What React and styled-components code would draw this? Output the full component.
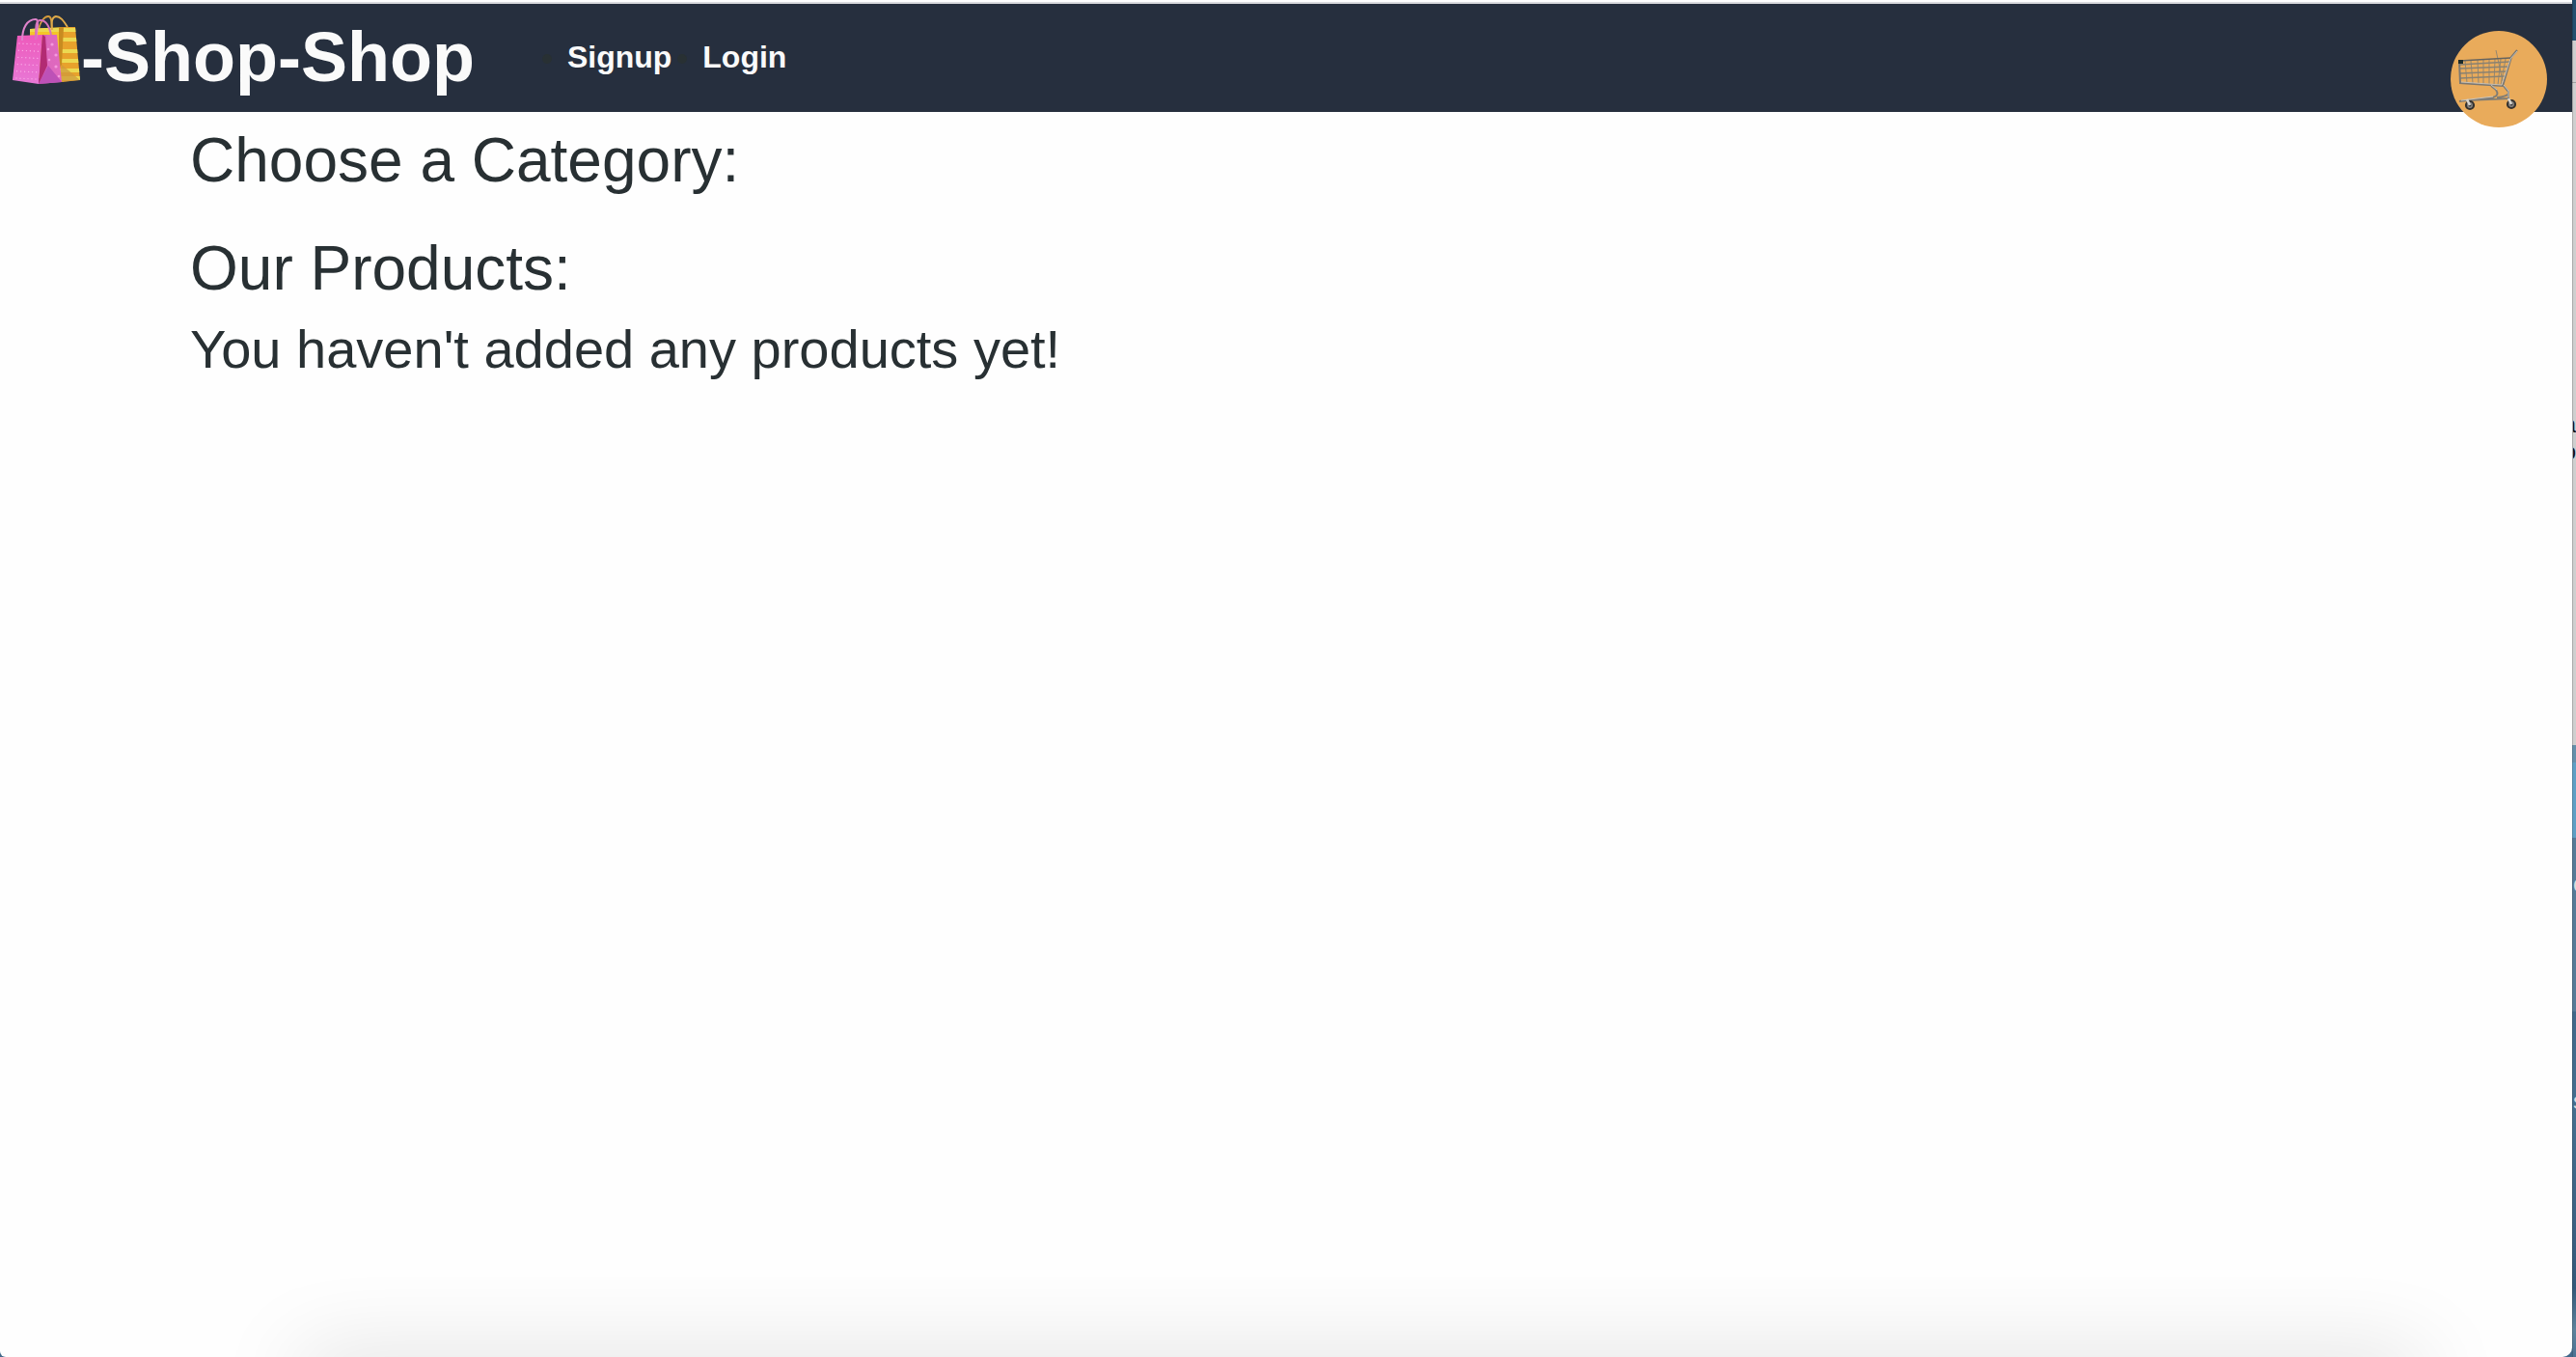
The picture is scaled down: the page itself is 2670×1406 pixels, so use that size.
import React from "react";
import styled, { createGlobalStyle } from "styled-components";

const GlobalStyle = createGlobalStyle`
  *, *::before, *::after { box-sizing: border-box; }
  body {
    margin: 0;
    background: #41688a;
    color: #283033;
    font-family: "Liberation Sans", Arial, Helvetica, sans-serif;
  }
`;

const Desktop = styled.div`
  display: flex;
  min-height: 100vh;
  overflow: hidden;
`;

const Page = styled.div`
  position: relative;
  flex: 1;
  min-width: 0;
  overflow: hidden;
  background: #fefefe;
  border-radius: 0 0 10px 6px;
`;

const Header = styled.header`
  position: relative;
  display: flex;
  align-items: center;
  height: 114px;
  margin-top: 2px;
  padding: 0 10px 2px;
  border-top: 2px solid #d9dade;
  background: #262f3e;
`;

const Brand = styled.h1`
  margin: 0;
  font-size: 72px;
  line-height: 108px;
  font-weight: 700;
`;

const BrandLink = styled.a`
  display: flex;
  align-items: center;
  gap: 2px;
  color: #fafafa;
  text-decoration: none;
`;

const BagsIcon = styled.svg`
  width: 72px;
  height: 72px;
  margin-bottom: 12px;
  overflow: visible;
`;

const NavList = styled.ul`
  display: flex;
  gap: 32px;
  margin: 0 0 0 96px;
  padding: 0;
  font-size: 32px;
  line-height: 48px;
`;

const NavItem = styled.li`
  list-style: disc;
`;

const NavLink = styled.a`
  color: #fafafa;
  font-weight: 700;
  text-decoration: none;
`;

const CartButton = styled.button`
  position: absolute;
  top: 28px;
  right: 26px;
  width: 100px;
  height: 100px;
  padding: 0;
  border: 0;
  border-radius: 50%;
  background: #e9ab5b;
  cursor: pointer;
`;

const CartIcon = styled.svg`
  display: block;
  width: 100px;
  height: 100px;
`;

const Main = styled.main`
  display: grid;
  gap: 40px;
  padding: 14px 197px;
`;

const Section = styled.section`
  display: grid;
  gap: 16px;
`;

const Title = styled.h2`
  margin: 0;
  font-size: 64px;
  line-height: 72px;
  font-weight: 400;
`;

const Notice = styled.h3`
  margin: 0;
  font-size: 56px;
  line-height: 64px;
  font-weight: 400;
`;

const DockShadow = styled.div`
  position: absolute;
  left: 312px;
  right: 156px;
  bottom: -44px;
  height: 40px;
  box-shadow: 0 0 90px rgba(0, 0, 0, 0.18);
`;

const Backdrop = styled.div`
  position: relative;
  display: flex;
  flex-direction: column;
  width: 4px;
  overflow: hidden;
`;

const Band = styled.div`
  flex: ${(p) => p.$grow || 0} 0 ${(p) => p.$size || 0}px;
  background: ${(p) => p.$fill};
  box-shadow: inset 1px 0 0 rgba(0, 0, 0, 0.18);
`;

const Peek = styled.span`
  position: absolute;
  top: ${(p) => p.$top}px;
  right: 0;
  width: 3px;
  overflow: hidden;
  color: ${(p) => p.$color};
  font-size: 24px;
  line-height: 24px;
  direction: ${(p) => (p.$end ? "rtl" : "ltr")};
`;

const dots = [];
for (let row = 0; row < 6; row += 1) {
  for (let col = 0; col < 6; col += 1) {
    dots.push([20 + col * 4 - row * 0.6, 46 + row * 7.2 + col * 0.2]);
  }
}

function Bags() {
  return (
    <BagsIcon viewBox="10 18 72 72" aria-hidden="true">
      <defs>
        <linearGradient id="pink" x1="0" y1="0" x2="0" y2="1">
          <stop offset="0" stopColor="#ee5abb" />
          <stop offset="1" stopColor="#e878d6" />
        </linearGradient>
        <linearGradient id="side" x1="0" y1="0" x2="1" y2="0">
          <stop offset="0" stopColor="#c84a9e" />
          <stop offset="0.4" stopColor="#dd68bd" />
          <stop offset="1" stopColor="#e069c0" />
        </linearGradient>
        <clipPath id="yellowBody">
          <path d="M31 31 65 29 78 29 83 84 63 86 31 80Z" />
        </clipPath>
      </defs>
      <path d="M40 31C42 23 46 18 50 18C55 18 53 30 54 33" fill="none" stroke="#d59c3d" strokeWidth="1.8" />
      <g clipPath="url(#yellowBody)">
        <path d="M28 26H66V88H28Z" fill="#f4c529" />
        <path d="M62 26H86V88H62Z" fill="#e8a22c" />
        <path d="M28 32H86M61 42H86M61 54H86M61 64H86M61 74H86M61 82H86" stroke="#ecd951" strokeWidth="4" />
        <path d="M61 29 66 29 64 68 61 72Z" fill="#c88c20" />
        <path d="M64 68 83 84 60 87Z" fill="#cf9a3c" opacity="0.75" />
      </g>
      <path d="M54 32C53 22 54 19 58 18C63 18 66 23 70 29" fill="none" stroke="#dfaa4a" strokeWidth="1.9" />
      <path d="M18 38 44 37 40 88 13 84Z" fill="url(#pink)" />
      <path d="M44 37 59 37 64 86 40 88Z" fill="url(#side)" />
      <path d="M44 37 47 39 49 69 40 88Z" fill="#b22b73" />
      <path d="M50 69 64 86 40 88Z" fill="#bd51b7" />
      {dots.map(([cx, cy]) => (
        <circle key={`${cx}-${cy}`} cx={cx} cy={cy} r="0.7" fill="#f9a9e6" />
      ))}
      <g fill="#f49add">
        <circle cx="54" cy="47" r="1.6" />
        <circle cx="58" cy="58" r="1.6" />
        <circle cx="50" cy="52" r="1.3" />
        <circle cx="51" cy="63" r="1.3" />
        <circle cx="58" cy="70" r="1.6" />
        <circle cx="61" cy="80" r="1.3" />
      </g>
      <path d="M23 43C23 30 28 21 37 21C41 21 38 34 37 42" fill="none" stroke="#e083cb" strokeWidth="2" />
      <path d="M37 42C37 27 37 22 42 22C47 22 51 28 53 37" fill="none" stroke="#d774ba" strokeWidth="2" />
    </BagsIcon>
  );
}

function Cart() {
  return (
    <CartIcon viewBox="2540 32 100 100" aria-hidden="true">
      <g fill="none" stroke="#8a8272" strokeWidth="0.9">
        <path d="M2549 67 2601 64M2549 71 2600 69M2550 76 2598 74M2550 81 2596 79" strokeWidth="1.4" />
        <path d="M2555 63 2557 86M2561 63 2563 86M2568 62 2569 87M2574 62 2574 87M2580 62 2580 88M2586 61 2585 88M2592 61 2589 88M2597 61 2592 88" />
        <path d="M2587 52 2594 84" />
      </g>
      <path d="M2549 63 2550 86 2594 89 2603 59 2609 52" fill="none" stroke="#7b7872" strokeWidth="2" />
      <path d="M2549 63 2602 60" fill="none" stroke="#66645f" strokeWidth="1.6" />
      <path d="M2551 85 2593 88 2602 61 2609 53" fill="none" stroke="#c8c5be" strokeWidth="0.9" />
      <path d="M2582 89 2587 93Q2591 99 2584 101L2549 105M2595 89 2600 95V102M2556 104 2601 102M2588 101Q2598 100 2600 97" fill="none" stroke="#7f7c75" strokeWidth="2" />
      <path d="M2582 88 2588 93M2595 88 2600 94V101M2551 104 2584 100" fill="none" stroke="#d0ccc4" strokeWidth="0.9" />
      <rect x="2548" y="62" width="5" height="4" fill="#1c2a29" />
      {[[2560, 109], [2603, 108]].map(([cx, cy]) => (
        <g key={cx}>
          <circle cx={cx} cy={cy} r="4" fill="#8b8885" stroke="#35322f" strokeWidth="2.2" />
          <circle cx={cx} cy={cy} r="1.5" fill="#38383a" />
          <path d={`M${cx - 3} ${cy - 6}L${cx} ${cy}`} stroke="#d6d4cf" strokeWidth="2.6" />
        </g>
      ))}
    </CartIcon>
  );
}

export default function App() {
  return (
    <Desktop>
      <GlobalStyle />
      <Page>
        <Header>
          <Brand>
            <BrandLink href="#home">
              <Bags />
              -Shop-Shop
            </BrandLink>
          </Brand>
          <nav aria-label="Account">
            <NavList>
              <NavItem><NavLink href="#signup">Signup</NavLink></NavItem>
              <NavItem><NavLink href="#login">Login</NavLink></NavItem>
            </NavList>
          </nav>
          <CartButton type="button" aria-label="Open cart">
            <Cart />
          </CartButton>
        </Header>
        <Main>
          <Section>
            <Title>Choose a Category:</Title>
          </Section>
          <Section>
            <Title>Our Products:</Title>
            <Notice>You haven't added any products yet!</Notice>
          </Section>
        </Main>
        <DockShadow />
      </Page>
      <Backdrop aria-hidden="true">
        <Band $size={42} $fill="#24506f" />
        <Band $size={43} $fill="#cfcfcf" />
        <Band $size={1} $fill="#a0a0a0" />
        <Band $size={686} $fill="#cfcfcf" />
        <Band $size={18} $fill="#6590ab" />
        <Band $size={78} $fill="#5e9fc5" />
        <Band $size={180} $fill="#567b98" />
        <Band $grow={1} $fill="linear-gradient(#41688a, #456f8f 30%, #3c6283 60%, #33597a 80%, #5d829c 92%, #4b7394)" />
        <Peek $top={428} $color="#111" $end>a</Peek>
        <Peek $top={456} $color="#111" $end>o</Peek>
        <Peek $top={904} $color="#ddd">o</Peek>
        <Peek $top={1129} $color="#ddd">s</Peek>
      </Backdrop>
    </Desktop>
  );
}
